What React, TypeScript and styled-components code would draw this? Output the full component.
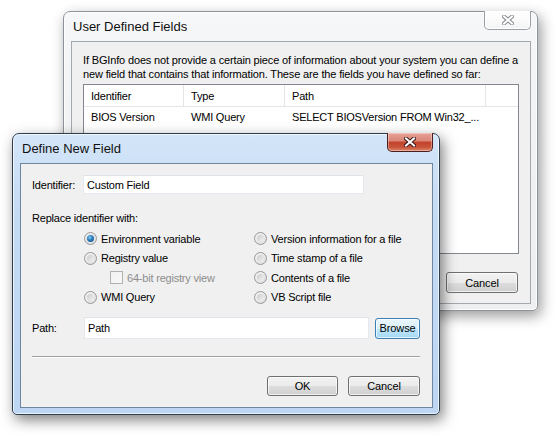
import styled, { createGlobalStyle } from 'styled-components'

const GlobalStyle = createGlobalStyle`
  html, body {
    margin: 0;
    padding: 0;
    background: #ffffff;
  }
  body {
    font-family: "Liberation Sans", Arial, sans-serif;
    font-size: 11px;
    letter-spacing: -0.2px;
    color: #000;
  }
`

const Desktop = styled.div`
  position: relative;
  width: 558px;
  height: 436px;
  overflow: hidden;
  background: #ffffff;
`

const Window = styled.div<{ $active?: boolean; $x: number; $y: number; $w: number; $h: number }>`
  position: absolute;
  left: ${(p) => p.$x}px;
  top: ${(p) => p.$y}px;
  width: ${(p) => p.$w}px;
  height: ${(p) => p.$h}px;
  box-sizing: border-box;
  display: flex;
  flex-direction: column;
  padding: 0 6px 6px 7px;
  border: 1px solid ${(p) => (p.$active ? '#2c3d50' : '#8d939a')};
  border-radius: 7px 7px 5px 5px;
  background: ${(p) =>
    p.$active
      ? 'linear-gradient(180deg, #d3e5f8 0%, #c4dbf4 30%, #bcd6f3 100%)'
      : 'linear-gradient(180deg, #f6f7f8 0%, #f1f2f4 40%, #eeeff1 100%)'};
  box-shadow: ${(p) =>
    p.$active
      ? 'inset 0 0 0 1px rgba(255,255,255,0.7), 3px 5px 14px rgba(0,0,0,0.5)'
      : 'inset 0 0 0 1px rgba(255,255,255,0.8), 3px 5px 14px rgba(0,0,0,0.4)'};
`

const TitleBar = styled.div`
  height: 29px;
  display: flex;
  align-items: flex-start;
  justify-content: space-between;
  flex-shrink: 0;
`

const Title = styled.span`
  font-size: 13px;
  line-height: 15px;
  letter-spacing: 0;
  padding: 7px 0 0 2px;
  color: #101010;
`

const CloseButton = styled.div<{ $active?: boolean }>`
  width: ${(p) => (p.$active ? 46 : 47)}px;
  height: 19px;
  margin-top: -1px;
  box-sizing: border-box;
  display: flex;
  align-items: center;
  justify-content: center;
  border: 1px solid ${(p) => (p.$active ? '#4d1e1e' : '#9aa0a6')};
  border-top: none;
  border-radius: 0 0 5px 5px;
  background: ${(p) =>
    p.$active
      ? 'linear-gradient(180deg, #e8a296 0%, #d98576 45%, #c2412a 50%, #c9553c 80%, #dc8a6c 100%)'
      : 'linear-gradient(180deg, #ffffff 0%, #fbfbfb 50%, #f2f3f4 100%)'};
  box-shadow: ${(p) => (p.$active ? 'inset 0 0 0 1px rgba(255,255,255,0.35)' : 'inset 0 0 0 1px #ffffff')};
`

const Panel = styled.div<{ $active?: boolean }>`
  flex: 1;
  box-sizing: border-box;
  background: #f0f0f0;
  border: 1px solid ${(p) => (p.$active ? '#6f86a0' : '#a3a8ae')};
  display: flex;
  flex-direction: column;
`

const BackBody = styled.div`
  padding: 11px 11px 0 11px;
  display: flex;
  flex-direction: column;
`

const Intro = styled.p`
  margin: 0;
  font-size: 11px;
  line-height: 14px;
  letter-spacing: -0.15px;
`

const ListView = styled.div`
  margin-top: 3px;
  height: 170px;
  box-sizing: border-box;
  border: 1px solid #828790;
  background: #ffffff;
`

const ListRow = styled.div<{ $header?: boolean }>`
  display: grid;
  grid-template-columns: 100px 101px 201px 1fr;
  height: ${(p) => (p.$header ? 21 : 20)}px;
  align-items: center;
  ${(p) => (p.$header ? 'border-bottom: 1px solid #e5e5e5;' : '')}
`

const Cell = styled.div<{ $header?: boolean }>`
  height: 100%;
  display: flex;
  align-items: center;
  padding-left: 7px;
  white-space: nowrap;
  overflow: hidden;
  box-sizing: border-box;
  ${(p) => (p.$header ? 'border-right: 1px solid #e5e5e5;' : '')}
  &:last-child {
    border-right: none;
  }
`

const Footer = styled.div`
  display: flex;
  justify-content: flex-end;
  padding: 18px 12px 0 0;
`

const Button = styled.button<{ $hot?: boolean; $w?: number; $h?: number }>`
  width: ${(p) => p.$w ?? 72}px;
  height: ${(p) => p.$h ?? 21}px;
  box-sizing: border-box;
  padding: 0;
  font-family: "Liberation Sans", Arial, sans-serif;
  font-size: 11px;
  letter-spacing: -0.1px;
  color: #000;
  border: 1px solid ${(p) => (p.$hot ? '#3c7fb1' : '#707070')};
  border-radius: 3px;
  background: ${(p) =>
    p.$hot
      ? 'linear-gradient(180deg, #eaf6fd 0%, #d9f0fc 50%, #bee6fd 51%, #a7d9f5 100%)'
      : 'linear-gradient(180deg, #f2f2f2 0%, #ebebeb 50%, #dddddd 51%, #cfcfcf 100%)'};
  box-shadow: inset 0 0 0 1px rgba(255, 255, 255, 0.7);
`

const FrontBody = styled.div`
  padding: 11px 12px 0 11px;
  display: flex;
  flex-direction: column;
`

const FieldRow = styled.div<{ $top?: number }>`
  display: flex;
  align-items: center;
  margin-top: ${(p) => p.$top ?? 0}px;
`

const Label = styled.span<{ $w: number }>`
  width: ${(p) => p.$w}px;
  flex-shrink: 0;
`

const TextBox = styled.div<{ $w: number; $h: number }>`
  width: ${(p) => p.$w}px;
  height: ${(p) => p.$h}px;
  box-sizing: border-box;
  display: flex;
  align-items: center;
  padding-left: 3px;
  background: #ffffff;
  border: 1px solid #e3e9ef;
  border-top-color: #dfe4ea;
`

const SectionLabel = styled.div`
  margin-top: 18px;
`

const RadioGrid = styled.div`
  display: grid;
  grid-template-columns: 170px auto;
  grid-auto-rows: 19.5px;
  margin: 5px 0 0 52px;
`

const Option = styled.div<{ $indent?: number; $disabled?: boolean }>`
  display: flex;
  align-items: center;
  gap: 4px;
  padding-left: ${(p) => p.$indent ?? 0}px;
  color: ${(p) => (p.$disabled ? '#8d8d8d' : '#000')};
  white-space: nowrap;
`

const RadioCircle = styled.span<{ $checked?: boolean }>`
  position: relative;
  width: 13px;
  height: 13px;
  box-sizing: border-box;
  border-radius: 50%;
  border: 1px solid #989898;
  background: linear-gradient(135deg, #f4f4f4 0%, #dcdcdc 100%);
  flex-shrink: 0;
  &::after {
    content: '';
    position: absolute;
    inset: 2px;
    border-radius: 50%;
    background: ${(p) =>
      p.$checked
        ? 'radial-gradient(circle at 40% 35%, #7fd0f5 0%, #2b7ab8 45%, #1b4f82 100%)'
        : 'linear-gradient(135deg, #cbcbcb 0%, #f3f3f3 100%)'};
    box-shadow: ${(p) => (p.$checked ? '0 0 0 1px #e6e6e6' : 'none')};
  }
`

const CheckSquare = styled.span`
  width: 13px;
  height: 13px;
  box-sizing: border-box;
  border: 1px solid #b1b1b1;
  background: linear-gradient(135deg, #f0f0f0 0%, #f8f8f8 100%);
  flex-shrink: 0;
`

const Separator = styled.div`
  margin-top: 17px;
  height: 0;
  border-top: 1px solid #a0a0a0;
  border-bottom: 1px solid #ffffff;
`

const ButtonRow = styled.div`
  display: flex;
  justify-content: flex-end;
  gap: 10px;
  margin-top: 18px;
`

const CloseGlyph = ({ active }: { active?: boolean }) => (
  <svg width="12" height="10" viewBox="0 0 12 10">
    <path
      d="M2 1.5 L10 8.5 M10 1.5 L2 8.5"
      stroke={active ? '#3a1a1a' : '#8a8f95'}
      strokeWidth="4"
      strokeLinecap="square"
    />
    <path d="M2 1.5 L10 8.5 M10 1.5 L2 8.5" stroke="#ffffff" strokeWidth="2" strokeLinecap="square" />
  </svg>
)

const fields = [{ id: 'BIOS Version', type: 'WMI Query', path: 'SELECT BIOSVersion FROM Win32_...' }]

const leftOptions = ['Environment variable', 'Version information for a file', 'Registry value', 'Time stamp of a file']

const App = () => {
  return (
    <>
      <GlobalStyle />
      <Desktop>
        <Window $x={63} $y={11} $w={475} $h={300}>
          <TitleBar>
            <Title>User Defined Fields</Title>
            <CloseButton>
              <CloseGlyph />
            </CloseButton>
          </TitleBar>
          <Panel>
            <BackBody>
              <Intro>
                If BGInfo does not provide a certain piece of information about your system you can define a new
                field that contains that information. These are the fields you have defined so far:
              </Intro>
              <ListView>
                <ListRow $header>
                  <Cell $header>Identifier</Cell>
                  <Cell $header>Type</Cell>
                  <Cell $header>Path</Cell>
                  <Cell $header />
                </ListRow>
                {fields.map((f) => (
                  <ListRow key={f.id}>
                    <Cell>{f.id}</Cell>
                    <Cell>{f.type}</Cell>
                    <Cell>{f.path}</Cell>
                    <Cell />
                  </ListRow>
                ))}
              </ListView>
            </BackBody>
            <Footer>
              <Button>Cancel</Button>
            </Footer>
          </Panel>
        </Window>

        <Window $active $x={12} $y={133} $w={428} $h={282}>
          <TitleBar>
            <Title>Define New Field</Title>
            <CloseButton $active>
              <CloseGlyph active />
            </CloseButton>
          </TitleBar>
          <Panel $active>
            <FrontBody>
              <FieldRow>
                <Label $w={51}>Identifier:</Label>
                <TextBox $w={281} $h={19}>Custom Field</TextBox>
              </FieldRow>
              <SectionLabel>Replace identifier with:</SectionLabel>
              <RadioGrid>
                {leftOptions.map((o, i) => (
                  <Option key={o}>
                    <RadioCircle $checked={i === 0} />
                    {o}
                  </Option>
                ))}
                <Option $indent={26} $disabled>
                  <CheckSquare />
                  64-bit registry view
                </Option>
                <Option>
                  <RadioCircle />
                  Contents of a file
                </Option>
                <Option>
                  <RadioCircle />
                  WMI Query
                </Option>
                <Option>
                  <RadioCircle />
                  VB Script file
                </Option>
              </RadioGrid>
              <FieldRow $top={10}>
                <Label $w={52}>Path:</Label>
                <TextBox $w={286} $h={22}>Path</TextBox>
                <Button $hot $w={45} $h={21} style={{ marginLeft: 6 }}>
                  Browse
                </Button>
              </FieldRow>
              <Separator />
              <ButtonRow>
                <Button $w={71} $h={20}>OK</Button>
                <Button $w={72} $h={20}>Cancel</Button>
              </ButtonRow>
            </FrontBody>
          </Panel>
        </Window>
      </Desktop>
    </>
  )
}

export default App
